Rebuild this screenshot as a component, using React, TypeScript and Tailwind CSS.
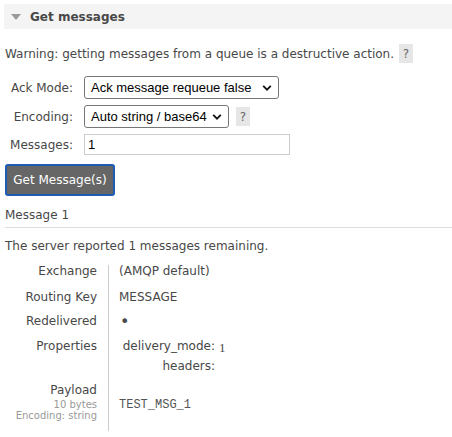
import React from "react";

function Help({ className = "" }: { className?: string }) {
  return (
    <span className={`inline-flex h-[19px] w-[14px] items-center justify-center bg-[#e6e6e6] text-[12px] text-[#666] ${className}`}>?</span>
  );
}

function Chevron() {
  return (
    <svg width="10" height="7" viewBox="0 0 10 7" className="absolute right-[6px] top-1/2 -translate-y-1/2">
      <path d="M1.2 1.4 L5 5.2 L8.8 1.4" fill="none" stroke="#111" strokeWidth="1.8" />
    </svg>
  );
}

export default function App() {
  return (
    <div className="h-[437px] w-[452px] overflow-hidden bg-white text-[12px] text-[#484848]" style={{ fontFamily: '"DejaVu Sans", Verdana, sans-serif' }}>
      <div className="ml-[4px] mt-[4px] flex h-[25px] items-center bg-[#f4f4f4]">
        <svg width="10" height="6" viewBox="0 0 10 6" className="ml-[7px]">
          <path d="M0 0 L10 0 L5 6 Z" fill="#999" />
        </svg>
        <span className="ml-[9px] font-bold text-[#484848]">Get messages</span>
      </div>
      <div className="ml-[5px] mt-[15px] flex items-center gap-[5px]">
        <span>Warning: getting messages from a queue is a destructive action.</span>
        <Help />
      </div>
      <div className="mt-[13px] grid grid-cols-[73px_auto] items-center gap-x-[11px] gap-y-[6px]">
        <span className="text-right">Ack Mode:</span>
        <div className="relative h-[23px] w-[195px] rounded-[3px] border border-[#767676] bg-white pl-[6px] text-[13px] leading-[21px] text-black" style={{ fontFamily: '"Liberation Sans", Arial, sans-serif' }}>
          Ack message requeue false
          <Chevron />
        </div>
        <span className="text-right">Encoding:</span>
        <div className="flex items-center gap-[7px]">
          <div className="relative h-[23px] w-[145px] rounded-[3px] border border-[#767676] bg-white pl-[6px] text-[13px] leading-[21px] text-black" style={{ fontFamily: '"Liberation Sans", Arial, sans-serif' }}>
            Auto string / base64
            <Chevron />
          </div>
          <Help />
        </div>
        <span className="text-right">Messages:</span>
        <div className="h-[21px] w-[206px] border border-[#ccc] bg-white pl-[3px] text-[13px] leading-[19px] text-black" style={{ fontFamily: '"Liberation Sans", Arial, sans-serif' }}>1</div>
      </div>
      <button className="ml-[5px] mt-[9px] flex h-[32px] w-[110px] items-center justify-center rounded-[3px] border-2 border-[#1d5bb5] bg-[#666] text-[12px] text-white">
        Get Message(s)
      </button>
      <div className="ml-[5px] mt-[10px] border-b border-[#ddd] pb-[3px]">Message 1</div>
      <div className="ml-[5px] mt-[9px]">The server reported 1 messages remaining.</div>
      <div className="mt-[8px] grid grid-cols-[97px_auto] text-[#484848]">
        <div className="flex flex-col items-end text-right">
          <div className="h-[26px] leading-[17px]">Exchange</div>
          <div className="h-[24px] leading-[17px]">Routing Key</div>
          <div className="h-[25px] leading-[17px]">Redelivered</div>
          <div className="h-[44px] leading-[17px]">Properties</div>
          <div className="leading-[17px]">Payload</div>
          <div className="text-[10px] leading-[11px] text-[#999]">10 bytes</div>
          <div className="text-[10px] leading-[12px] text-[#999]">Encoding: string</div>
        </div>
        <div className="ml-[11px] mt-[2px] h-[166px] border-l border-[#ccc] pl-[10px]">
          <div className="-mt-[2px] h-[26px] leading-[17px]">(AMQP default)</div>
          <div className="h-[24px] leading-[17px]">MESSAGE</div>
          <div className="h-[25px] pl-[1px] text-[16px] leading-[17px]">•</div>
          <div className="grid grid-cols-[96px_auto] gap-x-[4px]">
            <span className="h-[20px] text-right leading-[17px]">delivery_mode:</span>
            <span className="h-[20px] text-[13px] leading-[19px]" style={{ fontFamily: '"Liberation Serif", serif' }}>1</span>
            <span className="h-[20px] text-right leading-[17px]">headers:</span>
            <span></span>
          </div>
          <div className="mt-[19px] text-[12px] leading-[17px] text-[#555]" style={{ fontFamily: '"Liberation Mono", "Courier New", monospace' }}>TEST_MSG_1</div>
        </div>
      </div>
    </div>
  );
}
